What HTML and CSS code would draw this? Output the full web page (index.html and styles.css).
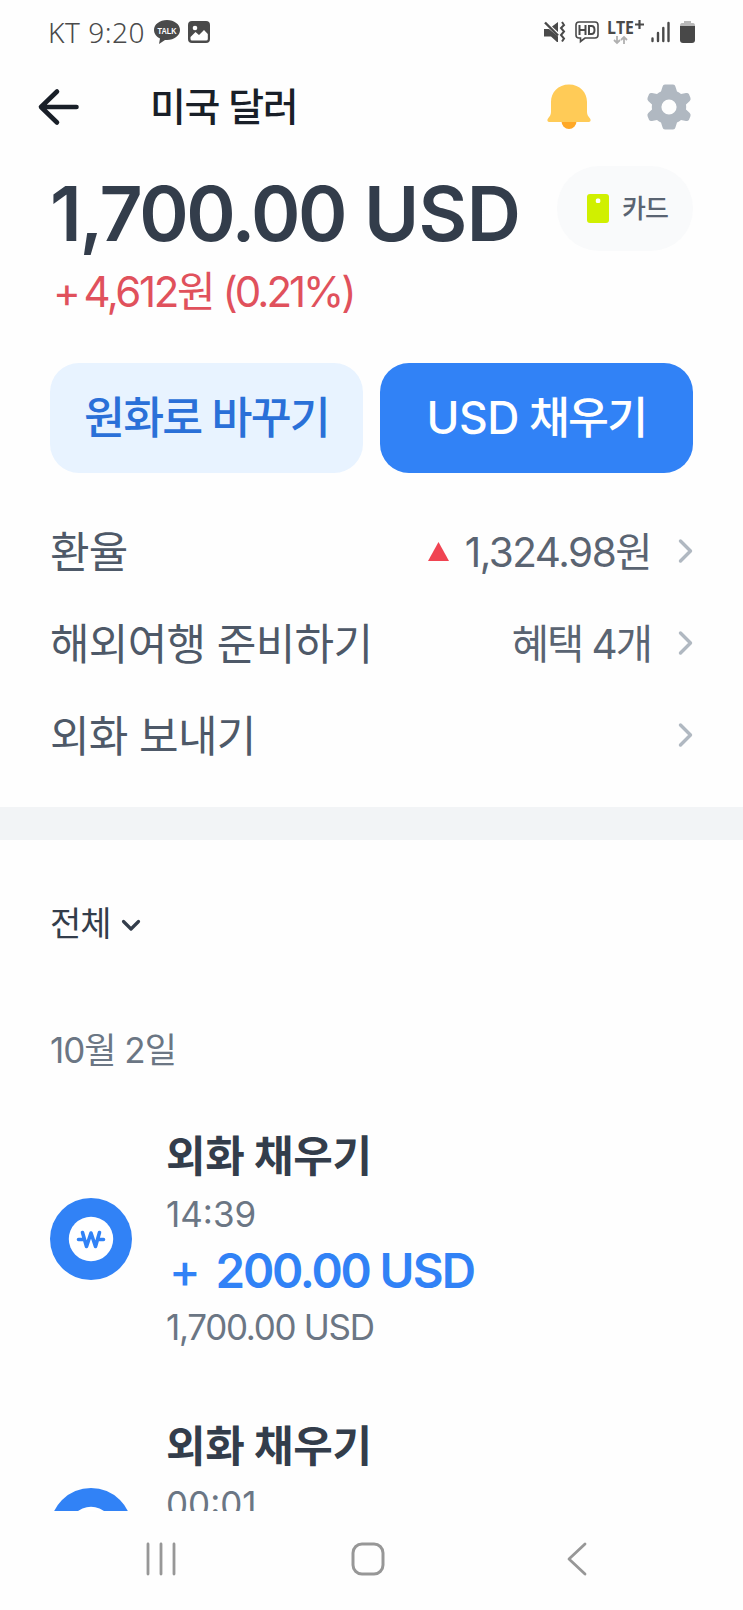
FILE: index.html
```html
<!DOCTYPE html>
<html lang="ko">
<head>
<meta charset="utf-8">
<title>미국 달러</title>
<link rel="stylesheet" href="styles.css">
</head>
<body>
<div class="screen">
  <div class="statusbar">
    <span class="clock">KT 9:20</span>
    <svg class="talk" width="26" height="24" viewBox="0 0 26 24"><path d="M13 0C5.800 0 0 4.400 0 10c0 3.700 2.400 6.800 6 8.600L5 24l6-4.100 2 .1c7.200 0 13-4.400 13-10S20.200 0 13 0z" fill="#4a4a4a"/><text x="13" y="13.500" text-anchor="middle" textLength="19" lengthAdjust="spacingAndGlyphs" class="talk-label">TALK</text></svg>
    <svg class="photo" width="22" height="22" viewBox="0 0 22 22"><rect x="1" y="1" width="20" height="20" rx="3" fill="#4a4a4a" stroke="#4a4a4a" stroke-width="2"/><circle cx="7" cy="7" r="2.300" fill="#fff"/><path d="M2.500 16l5-5 3.500 3 5-5 3.800 4v5q0 1.500-1.500 1.500H4q-1.500 0-1.500-1.500z" fill="#fff"/></svg>
    <div class="signals">
      <svg width="21" height="22" viewBox="0 0 21 22"><path d="M0 8h5l9 7.500V21h-1L7 15.500H0zM8 5.500L14 1v10z" fill="#4a4a4a"/><path d="M1 1.500l13 13" stroke="#4a4a4a" stroke-width="2.400" fill="none"/><path d="M18 1l2 3-3 3 3 3.500-3 3.500 3 3.500-2 3" stroke="#4a4a4a" stroke-width="2" fill="none"/></svg>
      <svg class="hd" width="24" height="22" viewBox="0 0 24 22"><path d="M4 1h16q3 0 3 3v10q0 3-3 3H10l-4.500 3.500V17H4q-3 0-3-3V4q0-3 3-3z" fill="none" stroke="#4a4a4a" stroke-width="1.600"/><path d="M4.500 4v10M10.500 4v10M4.500 9h6M14 5v8h2.500q3 0 3-4t-3-4z" fill="none" stroke="#4a4a4a" stroke-width="2"/></svg>
      <svg class="lte" width="38" height="26" viewBox="0 0 38 26"><text x="0" y="14.500" textLength="27" lengthAdjust="spacingAndGlyphs" class="lte-label">LTE</text><path d="M32.500 1v9M28 5.500h9" stroke="#4a4a4a" stroke-width="2.200"/><path d="M10 17v7M7 21l3 3 3-3M17 25v-7M14 21l3-3 3 3" fill="none" stroke="#b0b0b0" stroke-width="1.800"/></svg>
      <svg class="bars" width="19" height="20" viewBox="0 0 19 20"><path d="M1.500 16.500v2.500M7 11v8M12.300 6v13M17.500 1v18" stroke="#4a4a4a" stroke-width="2.400" stroke-linecap="round"/></svg>
      <svg class="battery" width="15" height="22" viewBox="0 0 15 22"><path d="M4 0h7v2h2q2 0 2 3H0q0-3 2-3h2z" fill="#b9b9b9"/><path d="M0 5h15v14q0 3-3 3H3q-3 0-3-3z" fill="#484848"/></svg>
    </div>
  </div>

  <header class="header">
    <svg class="back" width="42" height="36" viewBox="0 0 42 36"><path d="M38.500 18H3M19 2.500L3 18l16 15.500" fill="none" stroke="#191f28" stroke-width="4.600" stroke-linecap="round" stroke-linejoin="round"/></svg>
    <h1 class="title">미국 달러</h1>
    <svg class="bell" width="44" height="46" viewBox="0 0 44 46"><circle cx="22" cy="37.500" r="7.500" fill="#ffa826"/><path d="M22 .5C11 .5 4 8.500 4 18v10c0 3-1.500 4.500-3 6.500-1.300 1.800-.5 3.500 1.500 3.500h39c2 0 2.800-1.700 1.500-3.500-1.500-2-3-3.500-3-6.500V18C40 8.500 33 .5 22 .5z" fill="#ffcb57"/></svg>
    <svg class="gear" width="44" height="46" viewBox="-22 -23 44 46"><path fill-rule="evenodd" d="M-4-22.500H4Q6-22.500 6.400-20.500L8-15.500Q10-14.800 12-13L17-14Q19-14.500 20-12.800L21.500-9Q22-7 20.500-5.800L17-2.500Q17.400 0 17 2.500L20.500 5.800Q22 7 21.500 9L20 12.800Q19 14.500 17 14L12 13Q10 14.800 8 15.500L6.400 20.500Q6 22.500 4 22.500H-4Q-6 22.500-6.400 20.500L-8 15.500Q-10 14.800-12 13L-17 14Q-19 14.500-20 12.800L-21.500 9Q-22 7-20.500 5.800L-17 2.500Q-17.400 0-17-2.500L-20.500-5.800Q-22-7-21.500-9L-20-12.800Q-19-14.500-17-14L-12-13Q-10-14.800-8-15.500L-6.400-20.500Q-6-22.500-4-22.500zM0-7.600A7.600 7.600 0 1 0 0 7.600 7.600 7.600 0 1 0 0-7.600z" fill="#b0b8c1"/></svg>
  </header>

  <section class="summary">
    <div class="balance">
      <div class="amount">1,700.00 <span class="currency">USD</span></div>
      <div class="change"><span class="change-sign">+</span>4,612원 <span class="percent">(0.21%)</span></div>
    </div>
    <button class="card-chip"><svg width="22" height="29" viewBox="0 0 22 29"><rect width="22" height="29" rx="3" fill="#d0f000"/><rect x="8.800" y="4.500" width="4.500" height="4.500" rx="1.500" fill="#fff"/></svg><span class="card-label">카드</span></button>
  </section>

  <div class="actions">
    <button class="btn btn-soft">원화로 바꾸기</button>
    <button class="btn btn-primary"><span class="btn-code">USD</span> 채우기</button>
  </div>

  <nav class="links">
    <a class="link"><span class="link-name">환율</span><svg class="up" width="21" height="19" viewBox="0 0 21 19"><path d="M10.500 0L21 19H0z" fill="#f04452"/></svg><span class="link-value">1,324.98원</span><svg class="chevron" width="15" height="24" viewBox="0 0 15 24"><path d="M2.500 2l10 10-10 10" fill="none" stroke="#b0b8c1" stroke-width="3.400" stroke-linecap="round" stroke-linejoin="round"/></svg></a>
    <a class="link"><span class="link-name">해외여행 준비하기</span><span class="link-value value-benefit">혜택 4개</span><svg class="chevron" width="15" height="24" viewBox="0 0 15 24"><path d="M2.500 2l10 10-10 10" fill="none" stroke="#b0b8c1" stroke-width="3.400" stroke-linecap="round" stroke-linejoin="round"/></svg></a>
    <a class="link"><span class="link-name">외화 보내기</span><svg class="chevron" width="15" height="24" viewBox="0 0 15 24"><path d="M2.500 2l10 10-10 10" fill="none" stroke="#b0b8c1" stroke-width="3.400" stroke-linecap="round" stroke-linejoin="round"/></svg></a>
  </nav>

  <div class="divider"></div>

  <main class="history">
    <div class="filter"><span class="filter-label">전체</span><svg width="20" height="13" viewBox="0 0 20 13"><path d="M2.500 2.500L10 10l7.500-7.500" fill="none" stroke="#333d4b" stroke-width="3.200" stroke-linecap="round" stroke-linejoin="round"/></svg></div>
    <div class="date">10월 2일</div>
    <article class="entry">
      <svg class="coin" width="82" height="82" viewBox="-41 -41 82 82"><circle r="41" fill="#3182f6"/><circle r="22.200" fill="#fff"/><path d="M-8.500-6.500l4 14L0-6l4.500 13.500 4-14M-12.500.5h4M8.500 .5h4" fill="none" stroke="#3182f6" stroke-width="3.600" stroke-linecap="round" stroke-linejoin="round"/></svg>
      <div class="details">
        <div class="entry-name">외화 채우기</div>
        <div class="entry-time">14:39</div>
        <div class="entry-amount"><span class="plus">+</span>200.00 <span class="entry-code">USD</span></div>
        <div class="entry-balance">1,700.00 USD</div>
      </div>
    </article>
    <article class="entry">
      <svg class="coin" width="82" height="82" viewBox="-41 -41 82 82"><circle r="41" fill="#3182f6"/><circle r="22.200" fill="#fff"/></svg>
      <div class="details">
        <div class="entry-name">외화 채우기</div>
        <div class="entry-time">00:01</div>
      </div>
    </article>
  </main>

  <footer class="navbar">
    <svg width="30" height="34" viewBox="0 0 30 34"><path d="M2 2v30M15 2v30M28 2v30" stroke="#979797" stroke-width="2.800" stroke-linecap="round"/></svg>
    <svg class="home" width="34" height="34" viewBox="0 0 34 34"><rect x="2" y="2" width="30" height="30" rx="9" fill="none" stroke="#979797" stroke-width="3"/></svg>
    <svg class="nav-back" width="20" height="34" viewBox="0 0 20 34"><path d="M18 2L2 17l16 15" fill="none" stroke="#979797" stroke-width="2.800" stroke-linecap="round" stroke-linejoin="round"/></svg>
  </footer>
</div>
</body>
</html>
```
FILE: styles.css
```css
* { box-sizing: border-box; }
body { margin: 0; background: #fefefe; }
.screen {
  width: 743px; height: 1610px; overflow: hidden;
  display: flex; flex-direction: column;
  font-family: Inter, "Noto Sans CJK KR", sans-serif;
  color: #333d4b; white-space: nowrap;
}
svg { display: block; flex: none; overflow: visible; }
button { border: 0; padding: 0; font: inherit; white-space: nowrap; }

.statusbar { height: 64px; flex: none; padding: 0 48px; display: flex; align-items: center; }
.clock { font: 300 28px/62px "Noto Sans", sans-serif; letter-spacing: .5px; color: #4a4a4a; width: 106px; padding-bottom: 1px; }
.photo { margin-left: 8px; }
.talk-label { font: 700 8.500px "Liberation Sans", sans-serif; fill: #fff; }
.signals { margin-left: auto; display: flex; align-items: center; }
.hd { margin-left: 10px; }
.lte { margin-left: 8px; }
.lte-label { font: 700 18px "Open Sans", sans-serif; fill: #4a4a4a; }
.bars { margin-left: 6px; }
.battery { margin-left: 10px; }

.header { height: 86px; flex: none; padding: 0 52px 0 38px; display: flex; align-items: center; }
.title { margin: 0 auto 0 70px; font-size: 39px; font-weight: 500; line-height: 86px; letter-spacing: -1.300px; color: #191f28; }
.gear { margin-left: 56px; }

.summary { height: 213px; flex: none; padding: 16px 50px 0; display: flex; justify-content: space-between; align-items: flex-start; }
.amount { font-size: 75px; font-weight: 600; line-height: 96px; letter-spacing: -2.300px; }
.currency { letter-spacing: -.6px; margin-left: 2px; }
.change { font-size: 42px; line-height: 60px; letter-spacing: -2.400px; color: #e0515c; }
.change-sign { margin: 0 5px 0 3px; }
.percent { letter-spacing: -3px; }
.card-chip { width: 136px; height: 85px; flex: none; border-radius: 42px; background: #f9fafb; display: flex; align-items: center; padding-left: 30px; gap: 13px; font-size: 26px; font-weight: 500; color: #5a6472; letter-spacing: -1px; }
.card-label { padding-bottom: 4px; }

.actions { height: 110px; flex: none; padding: 0 50px; display: grid; grid-template-columns: 1fr 1fr; gap: 17px; }
.btn { border-radius: 29px; padding-bottom: 8px; font-size: 44.500px; font-weight: 500; letter-spacing: -1.800px; }
.btn-code { letter-spacing: -.5px; }
.btn-soft { background: #e8f3ff; color: #2a70d8; }
.btn-primary { background: #3182f6; color: #fff; }

.links { flex: none; padding: 32px 50px 0; height: 334px; }
.link { height: 92px; display: flex; align-items: center; color: #4e5968; }
.link-name { font-size: 43px; letter-spacing: -.7px; margin-right: auto; padding-bottom: 5px; }
.link-value { font-size: 40.500px; letter-spacing: -1.500px; padding-bottom: 4px; color: #5a6472; }
.value-benefit { letter-spacing: -2px; }
.up { margin-right: 16px; }
.chevron { margin-left: 27px; }

.divider { height: 33px; flex: none; background: #f2f4f6; }

.history { height: 671px; flex: none; overflow: hidden; padding: 54px 50px 0; }
.filter { height: 58px; display: flex; align-items: center; gap: 10px; font-size: 34px; letter-spacing: -1px; }
.filter-label { padding-bottom: 4px; }
.filter svg { margin-top: 4px; }
.date { height: 60px; line-height: 60px; margin-top: 68px; margin-bottom: 49px; font-size: 35px; letter-spacing: -1px; color: #6b7684; }
.entry { height: 220px; margin-bottom: 70px; display: flex; align-items: center; gap: 34px; }
.details { height: 226px; }
.entry-name { height: 60px; line-height: 60px; font-size: 43px; font-weight: 700; letter-spacing: -.4px; }
.entry-time { height: 56px; line-height: 56px; font-size: 35px; color: #6b7684; }
.entry-amount { height: 57px; line-height: 58px; font-size: 47.500px; font-weight: 600; letter-spacing: -2.200px; color: #3182f6; }
.entry-code { letter-spacing: -1.800px; }
.plus { margin: 0 17px 0 3px; font-weight: 500; }
.entry-balance { height: 56px; line-height: 56px; font-size: 35px; letter-spacing: -1.300px; color: #6b7684; }

.navbar { flex: 1; padding: 0 156px 3px 146px; display: flex; align-items: center; }
.home { margin-left: 175px; }
.nav-back { margin-left: auto; }
```
